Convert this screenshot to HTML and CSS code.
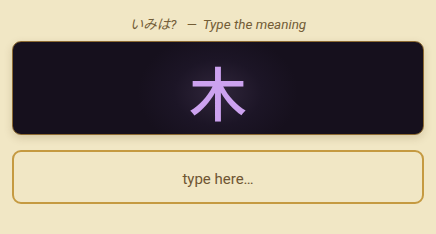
FILE: index.html
```html
<!DOCTYPE html>
<html lang="en">

<head>
    <title>Kanji Meaning</title>
    <meta charset="utf-8">
    <meta name="viewport" content="width=device-width, initial-scale=1.0">
    <link rel="stylesheet" href="styles.css">
</head>

<body>
    <div class="container">
        <p class="prompt">いみは?<span class="dash">—</span>Type the meaning</p>
        <div class="kanji-card">
            <span class="kanji">木</span>
        </div>
        <input class="answer-input" type="text" placeholder="type here…">
    </div>
</body>

</html>
```

FILE: styles.css
```css
body {
    padding: 0;
    margin: 0;
    overflow: hidden;
    background: #f1e7c5;
    font-family: Roboto, "Noto Sans CJK JP", sans-serif;
}

.container {
    display: flex;
    flex-direction: column;
    padding: 16px 12px 0;
}

.prompt {
    margin: 0 0 8px;
    font-size: 13.5px;
    line-height: 17px;
    font-style: italic;
    text-align: center;
    color: #735d37;
}

.dash {
    margin: 0 6px 0 10px;
}

.kanji-card {
    height: 92px;
    display: flex;
    align-items: center;
    justify-content: center;
    border: 1px solid #8c6a32;
    border-radius: 9px;
    background: radial-gradient(ellipse 80px 60px at 50% 55%, #30263b 0%, #1c1526 55%, #16101d 100%);
    box-shadow: 0 3px 8px rgba(90, 60, 20, 0.18);
}

.kanji {
    font-family: "Noto Sans CJK JP", sans-serif;
    font-weight: 500;
    font-size: 58px;
    line-height: 58px;
    color: #cca2ef;
    margin-top: 6px;
}

.answer-input {
    margin-top: 15px;
    height: 54px;
    box-sizing: border-box;
    border: 2px solid #c59a41;
    border-radius: 9px;
    background: #f1e7c5;
    font-family: Roboto, sans-serif;
    font-size: 15px;
    text-align: center;
    color: #6b5030;
    outline: none;
    padding: 4px 0 0;
}

.answer-input::placeholder {
    color: #6f5532;
    opacity: 1;
}
```
